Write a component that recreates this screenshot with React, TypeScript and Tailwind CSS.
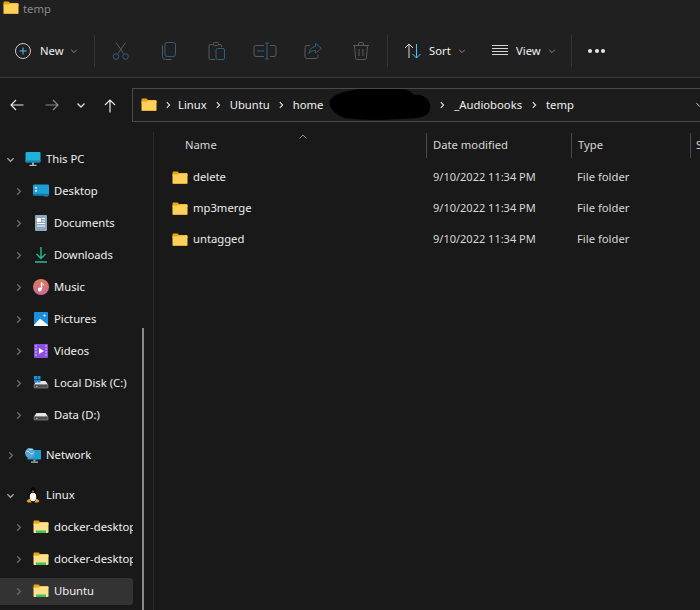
import React from 'react';

const FONT = 'font-["Noto_Sans","Open_Sans",sans-serif]';

function FolderIcon({ size = 16, green = false }: { size?: number; green?: boolean }) {
  return (
    <svg width={size} height={size} viewBox="0 0 16 16" className="shrink-0">
      <path d="M0.5 2.5a1 1 0 0 1 1-1h4l1.6 1.5h7.4a1 1 0 0 1 1 1v2h-15z" fill="#eaa60e" />
      <path d="M0.5 4.6h5.4l1.5-1.1h7.1a1 1 0 0 1 1 1v8.400a1 1 0 0 1-1 1h-13a1 1 0 0 1-1-1z" fill={green ? '#fde08c' : '#fcd05a'} />
      {green ? (
        <path d="M3 11.500h10V14H3z" fill="#3cc35a" />
      ) : (
        <path d="M0.500 13.200h15a1 1 0 0 1-1 .800h-13a1 1 0 0 1-1-.800z" fill="#e0a028" />
      )}
    </svg>
  );
}

function Chevron({ dir = 'right', color = '#7a7a7a', size = 10, width = 1.6 }: { dir?: 'right' | 'down' | 'up'; color?: string; size?: number; width?: number }) {
  const d = dir === 'right' ? 'M3.5 1.5 7 5 3.5 8.5' : dir === 'down' ? 'M1.5 3.5 5 7 8.5 3.5' : 'M1.5 6.5 5 3 8.5 6.5';
  return (
    <svg width={size} height={size} viewBox="0 0 10 10" fill="none" stroke={color} strokeWidth={width} className="shrink-0">
      <path d={d} />
    </svg>
  );
}

function ToolIcon({ children }: { children: React.ReactNode }) {
  return (
    <svg width="20" height="20" viewBox="0 0 20 20" fill="none" strokeWidth="1" className="shrink-0">
      {children}
    </svg>
  );
}

const GREY = '#5a5a5a';
const BLUE = '#2f5f7f';

function CutIcon() {
  return (
    <ToolIcon>
      <path d="M5 1.5 12.5 12.5M14.5 1.5 7 12.5" stroke={GREY} />
      <circle cx="5" cy="15.5" r="2.8" stroke={BLUE} />
      <circle cx="14.5" cy="15.5" r="2.8" stroke={BLUE} />
    </ToolIcon>
  );
}

function CopyIcon() {
  return (
    <ToolIcon>
      <rect x="6" y="1.5" width="10.5" height="14" rx="2" stroke={BLUE} />
      <path d="M3.5 4.5v11a3 3 0 0 0 3 3h6" stroke={GREY} />
    </ToolIcon>
  );
}

function PasteIcon() {
  return (
    <ToolIcon>
      <path d="M6 3.5H3.5a1.5 1.5 0 0 0-1.5 1.5v12a1.5 1.5 0 0 0 1.5 1.5H8M14.5 6V5a1.500 1.500 0 0 0-1.500-1.500H11" stroke={GREY} />
      <rect x="6.500" y="1.500" width="5" height="3" rx="1" stroke={GREY} />
      <rect x="9" y="7.500" width="8.500" height="11" rx="1.500" stroke={BLUE} />
    </ToolIcon>
  );
}

function RenameIcon() {
  return (
    <svg width="24" height="20" viewBox="0 0 24 20" fill="none" strokeWidth="1" className="shrink-0">
      <path d="M11 4.500H3a2 2 0 0 0-2 2v7a2 2 0 0 0 2 2h8" stroke={GREY} />
      <path d="M17 4.500h4a2 2 0 0 1 2 2v7a2 2 0 0 1-2 2h-4" stroke={GREY} />
      <path d="M4 10h7M12 2h4M12 18h4M14 2v16" stroke={BLUE} />
    </svg>
  );
}

function ShareIcon() {
  return (
    <ToolIcon>
      <path d="M7 4.500H4a2 2 0 0 0-2 2v9a2 2 0 0 0 2 2h9a2 2 0 0 0 2-2v-2" stroke={GREY} />
      <path d="M12.500 2.500 18.500 7.500 12.500 12v-2.500c-3.500 0-5 1-6.500 3 .3-4 2.500-6.500 6.500-7z" stroke={BLUE} />
    </ToolIcon>
  );
}

function DeleteIcon() {
  return (
    <ToolIcon>
      <path d="M2 4.500h16M7.500 4.500V3a1.500 1.500 0 0 1 1.500-1.500h2A1.500 1.500 0 0 1 12.500 3v1.500M3.500 4.500l1 12a2 2 0 0 0 2 2h7a2 2 0 0 0 2-2l1-12M8 8v7M12 8v7" stroke={GREY} />
    </ToolIcon>
  );
}

function ToolGap({ className }: { className: string }) {
  return <div className={`w-px h-8 bg-[#353535] shrink-0 ${className}`} />;
}

function ToolLabel({ label, className }: { label: string; className: string }) {
  return (
    <>
      <span className={`text-[11.25px] text-[#f0f0f0] ${className}`}>{label}</span>
      <Chevron dir="down" color="#9a9a9a" size={8} width={1.1} />
    </>
  );
}

function Toolbar() {
  return (
    <div className="h-[42px] flex items-center pl-[13px] pb-[5px] bg-[#202020] border-b border-[#3a3a3a] box-content">
      <svg width="20" height="20" viewBox="0 0 20 20" fill="none" className="shrink-0">
        <circle cx="10" cy="10" r="7.500" stroke="#c8c8c8" />
        <path d="M10 6.500v7M6.500 10h7" stroke="#4cc2ff" />
      </svg>
      <div className="ml-[7px] flex items-center">
        <ToolLabel label="New" className="w-[30px]" />
      </div>
      <ToolGap className="ml-[16px]" />
      <div className="ml-[16px]"><CutIcon /></div>
      <div className="ml-[28px]"><CopyIcon /></div>
      <div className="ml-[28px]"><PasteIcon /></div>
      <div className="ml-[26px]"><RenameIcon /></div>
      <div className="ml-[26px]"><ShareIcon /></div>
      <div className="ml-[28px]"><DeleteIcon /></div>
      <ToolGap className="ml-[16px]" />
      <svg width="20" height="20" viewBox="0 0 20 20" fill="none" className="ml-[15px] shrink-0">
        <path d="M6 17V3M2 7l4-4 4 4" stroke="#d8d8d8" />
        <path d="M13.500 3v14M9.500 13l4 4 4-4" stroke="#4cc2ff" />
      </svg>
      <div className="ml-[6px] flex items-center">
        <ToolLabel label="Sort" className="w-[29px]" />
      </div>
      <svg width="18" height="14" viewBox="0 0 18 14" fill="none" stroke="#d8d8d8" className="ml-[25px] shrink-0">
        <path d="M1 1.500h16M1 4.500h16M1 7.500h16M1 10.500h16" />
      </svg>
      <div className="ml-[7px] flex items-center">
        <ToolLabel label="View" className="w-[32px]" />
      </div>
      <ToolGap className="ml-[15px]" />
      <div className="ml-[16px] flex gap-[2.500px]">
        <span className="w-[4px] h-[4px] rounded-full bg-[#e8e8e8]" />
        <span className="w-[4px] h-[4px] rounded-full bg-[#e8e8e8]" />
        <span className="w-[4px] h-[4px] rounded-full bg-[#e8e8e8]" />
      </div>
    </div>
  );
}

function Crumb({ label, width }: { label?: string; width: string }) {
  return (
    <>
      <span className={`${width} flex justify-center shrink-0`}>
        <Chevron color="#e0e0e0" size={8} width={1.4} />
      </span>
      {label && <span className="text-[11.25px] text-[#f0f0f0] whitespace-nowrap">{label}</span>}
    </>
  );
}

function AddressBar() {
  return (
    <div className="h-[54px] flex items-center bg-[#191919]">
      <div className="w-[132px] shrink-0 flex items-center pl-[9px]">
        <svg width="16" height="16" viewBox="0 0 16 16" fill="none" stroke="#e8e8e8" strokeWidth="1.200">
          <path d="M2 8h12.500M7 3 2 8l5 5" />
        </svg>
        <svg width="16" height="16" viewBox="0 0 16 16" fill="none" stroke="#8a8a8a" strokeWidth="1.200" className="ml-[19px]">
          <path d="M1.500 8H14M9 3l5 5-5 5" />
        </svg>
        <span className="ml-[16px]"><Chevron dir="down" color="#d8d8d8" size={10} width={1.400} /></span>
        <svg width="16" height="16" viewBox="0 0 16 16" fill="none" stroke="#e8e8e8" strokeWidth="1.200" className="ml-[16px] mt-[1px]">
          <path d="M8 14.500V2M3 7l5-5 5 5" />
        </svg>
      </div>
      <div className="relative flex-1 h-[34px] border border-r-0 border-[#4a4a4a] flex items-center pl-[8px] overflow-hidden bg-[#1c1c1c]">
        <FolderIcon size={16} />
        <Crumb width="w-[21px]" label="Linux" />
        <Crumb width="w-[23px]" label="Ubuntu" />
        <Crumb width="w-[23px]" label="home" />
        <Crumb width="w-[22px]" />
        <span className="w-[84px] shrink-0" />
        <Crumb width="w-[25px]" label="_Audiobooks" />
        <Crumb width="w-[24px]" label="temp" />
        <span className="absolute right-[-4px] top-[11px]"><Chevron dir="down" color="#d0d0d0" size={9} width={1.100} /></span>
        <svg width="108" height="34" viewBox="0 0 108 34" className="absolute left-[194px] top-[-1px]">
          <path d="M3 12C8 5 24 1 44 0h24c10 0 16 3 19 7 8-1 15 3 16 10 1 8-4 12-14 13-22 2-50 3-72 0C12 28 0 21 3 12z" fill="#000" />
        </svg>
      </div>
    </div>
  );
}

function PcIcon() {
  return (
    <svg width="16" height="16" viewBox="0 0 16 16">
      <rect x="0.500" y="1" width="15" height="10.500" rx="1" fill="#1fb2d8" />
      <path d="M0.500 9.500h15v1a1 1 0 0 1-1 1h-13a1 1 0 0 1-1-1z" fill="#1580a8" />
      <rect x="7" y="11.500" width="2" height="2.500" fill="#9aa4aa" />
      <rect x="4.500" y="13.800" width="7" height="1.200" fill="#b8c0c4" />
    </svg>
  );
}

function DesktopIcon() {
  return (
    <svg width="16" height="16" viewBox="0 0 16 16">
      <rect x="0" y="1.500" width="16" height="11" rx="1" fill="#1c9fd6" />
      <rect x="0" y="10.800" width="16" height="1.700" fill="#1274a8" />
      <rect x="2" y="4" width="2" height="1.500" fill="#fff" />
      <rect x="2" y="7" width="2" height="1.500" fill="#fff" />
      <rect x="11.500" y="12.500" width="1" height="1" fill="#8fb8cc" />
      <rect x="13.500" y="12.500" width="1" height="1" fill="#8fb8cc" />
    </svg>
  );
}

function DocumentsIcon() {
  return (
    <svg width="16" height="16" viewBox="0 0 16 16">
      <rect x="2" y="0" width="12" height="16" rx="1" fill="#8fa8c0" />
      <rect x="4" y="3" width="4" height="4" fill="#fff" />
      <path d="M9 3.500h3M9 6h3M4 8.500h8M4 11h8" stroke="#fff" strokeWidth="1" />
    </svg>
  );
}

function DownloadsIcon() {
  return (
    <svg width="16" height="16" viewBox="0 0 16 16" fill="none" stroke="#1db88e" strokeWidth="1.500">
      <path d="M8 0v11M3.500 7 8 11.500 12.500 7" />
      <path d="M2 15h12" stroke="#2ab8a0" />
    </svg>
  );
}

function MusicIcon() {
  return (
    <svg width="16" height="16" viewBox="0 0 16 16">
      <defs>
        <linearGradient id="musicFill" x1="0" y1="0" x2="0" y2="1">
          <stop offset="0" stopColor="#e07a58" />
          <stop offset="1" stopColor="#c86a98" />
        </linearGradient>
      </defs>
      <circle cx="8" cy="8" r="8" fill="url(#musicFill)" />
      <path d="M8.500 3.500v6.500" stroke="#fff" strokeWidth="1.300" />
      <path d="M8.500 3.500c.5 1.500 2 1.500 2.500 3" stroke="#fff" strokeWidth="1" fill="none" />
      <circle cx="6.800" cy="10.500" r="1.900" fill="#fff" />
    </svg>
  );
}

function PicturesIcon() {
  return (
    <svg width="16" height="16" viewBox="0 0 16 16">
      <rect x="1" y="1" width="14" height="14" rx="1" fill="#1a8fe0" />
      <path d="M1 14 7 7.500 15 14v1H1z" fill="#fff" />
      <circle cx="11.500" cy="4.500" r="1.100" fill="#fff" />
    </svg>
  );
}

function VideosIcon() {
  return (
    <svg width="16" height="16" viewBox="0 0 16 16">
      <rect x="1" y="1" width="14" height="14" rx="1" fill="#8a4fe0" />
      <path d="M6 5v6l5-3z" fill="#fff" />
      <path d="M2 3h2M2 6h2M2 9h2M2 12h2M12 3h2M12 6h2M12 9h2M12 12h2" stroke="#d8c0f8" strokeWidth="1" />
    </svg>
  );
}

function DriveBody() {
  return (
    <>
      <path d="M3.500 6h9l2.500 3.500H1z" fill="#e4e4e4" />
      <rect x="1" y="9.500" width="14" height="3.500" rx="0.500" fill="#4e4e4e" stroke="#a8a8a8" strokeWidth="0.500" />
      <rect x="3" y="10.800" width="1.500" height="1.200" fill="#4fe04f" />
    </>
  );
}

function LocalDiskIcon() {
  return (
    <svg width="16" height="16" viewBox="0 0 16 16">
      <DriveBody />
      <rect x="1" y="1" width="3" height="3" fill="#1a90e0" />
      <rect x="4.500" y="1" width="3" height="3" fill="#1a90e0" />
      <rect x="1" y="4.500" width="3" height="3" fill="#1a90e0" />
      <rect x="4.500" y="4.500" width="3" height="3" fill="#1a90e0" />
    </svg>
  );
}

function DataDiskIcon() {
  return (
    <svg width="16" height="16" viewBox="0 0 16 16">
      <DriveBody />
    </svg>
  );
}

function NetworkIcon() {
  return (
    <svg width="16" height="16" viewBox="0 0 16 16">
      <rect x="2.500" y="3" width="13.500" height="9.500" rx="0.500" fill="#1c9fd6" />
      <rect x="8.500" y="12.500" width="2" height="2" fill="#9aa4aa" />
      <rect x="6" y="14.500" width="7" height="1.200" fill="#b8c0c4" />
      <circle cx="5" cy="6" r="5" fill="#5aa4d0" />
      <path d="M1.500 4.500c2-1 3 1 4 2s2 0 3-1M3.500 2c1 1 3 1 4 0" stroke="#cfeaf8" fill="none" strokeWidth="1" />
    </svg>
  );
}

function TuxIcon() {
  return (
    <svg width="16" height="16" viewBox="0 0 16 16">
      <ellipse cx="8" cy="10" rx="4.800" ry="5" fill="#050505" />
      <ellipse cx="8" cy="3.500" rx="2.600" ry="3.200" fill="#050505" />
      <ellipse cx="8" cy="10" rx="3.300" ry="4.200" fill="#f6f6f6" />
      <path d="M6.800 3.800h2.400L8 5.200z" fill="#f0b030" />
      <path d="M1.500 14 4.500 11.500 6.500 15.500H3zM14.500 14 11.500 11.500 9.500 15.500H13z" fill="#e8a428" />
    </svg>
  );
}

type NavItem = { label: string; icon: React.ReactNode; depth: 0 | 1; open?: boolean; selected?: boolean; gapBefore?: boolean };

const navItems: NavItem[] = [
  { label: 'This PC', icon: <PcIcon />, depth: 0, open: true },
  { label: 'Desktop', icon: <DesktopIcon />, depth: 1 },
  { label: 'Documents', icon: <DocumentsIcon />, depth: 1 },
  { label: 'Downloads', icon: <DownloadsIcon />, depth: 1 },
  { label: 'Music', icon: <MusicIcon />, depth: 1 },
  { label: 'Pictures', icon: <PicturesIcon />, depth: 1 },
  { label: 'Videos', icon: <VideosIcon />, depth: 1 },
  { label: 'Local Disk (C:)', icon: <LocalDiskIcon />, depth: 1 },
  { label: 'Data (D:)', icon: <DataDiskIcon />, depth: 1 },
  { label: 'Network', icon: <NetworkIcon />, depth: 0, gapBefore: true },
  { label: 'Linux', icon: <TuxIcon />, depth: 0, open: true, gapBefore: true },
  { label: 'docker-desktop', icon: <FolderIcon green />, depth: 1 },
  { label: 'docker-desktop-data', icon: <FolderIcon green />, depth: 1 },
  { label: 'Ubuntu', icon: <FolderIcon green />, depth: 1, selected: true },
];

function Sidebar() {
  return (
    <div className="relative w-[154px] shrink-0 border-r border-[#2a2a2a] pt-[11px] overflow-hidden">
      {navItems.map(item => (
        <div key={item.label} className={`w-[133px] h-8 flex items-center ${item.gapBefore ? 'mt-2' : ''}`}>
          <div className={`w-full h-[27px] flex items-center rounded-r-[3px] overflow-hidden ${item.depth === 1 ? 'pl-[13px]' : 'pl-[5px]'} ${item.selected ? 'bg-[#333333]' : ''}`}>
            <span className="w-[10px] shrink-0 flex justify-center">
              <Chevron dir={item.open ? 'down' : 'right'} color={item.open ? '#a0a0a0' : '#6a6a6a'} size={9} width={1.500} />
            </span>
            <span className="ml-[10px] shrink-0 flex">{item.icon}</span>
            <span className="ml-[5px] text-[11.25px] text-[#f0f0f0] whitespace-nowrap">{item.label}</span>
          </div>
        </div>
      ))}
      <div className="absolute left-[142px] top-[196px] bottom-0 w-[2px] bg-[#8a8a8a]" />
    </div>
  );
}

const rows = ['delete', 'mp3merge', 'untagged'];

function ColumnHead({ label, width, className = '' }: { label: string; width: string; className?: string }) {
  return (
    <div className={`${width} shrink-0 h-[25px] flex items-center pl-[6px] border-r border-[#4a4a4a] text-[11.25px] text-[#d8d8d8] whitespace-nowrap ${className}`}>
      {label}
    </div>
  );
}

function FileList() {
  return (
    <div className="relative flex-1 min-w-0 overflow-hidden">
      <div className="flex pt-[1px] pl-[3px]">
        <ColumnHead label="Name" width="w-[270px]" className="pl-[28px]" />
        <ColumnHead label="Date modified" width="w-[145px]" />
        <ColumnHead label="Type" width="w-[119px]" />
        <div className="h-[25px] flex items-center pl-[5px] text-[11.25px] text-[#d8d8d8]">S</div>
      </div>
      <span className="absolute left-[144px] top-[0px]"><Chevron dir="up" color="#8a8a8a" size={10} width={1} /></span>
      <div className="pt-[4px]">
        {rows.map(name => (
          <div key={name} className="h-[31px] flex items-center text-[11.25px] text-[#ececec]">
            <div className="w-[279px] shrink-0 flex items-center pl-[18px] gap-[5px]">
              <FolderIcon size={16} />
              <span>{name}</span>
            </div>
            <span className="w-[144px] shrink-0 text-[11px] text-[#d8d8d8]">9/10/2022 11:34 PM</span>
            <span className="text-[#d8d8d8]">File folder</span>
          </div>
        ))}
      </div>
    </div>
  );
}

export default function App() {
  return (
    <div className={`w-[700px] h-[610px] overflow-hidden flex flex-col bg-[#191919] ${FONT}`}>
      <div className="h-[30px] shrink-0 bg-[#202020] flex items-start pl-[3px] pt-0">
        <FolderIcon size={16} />
        <span className="ml-[4px] mt-[1px] text-[11.25px] text-[#8a8a8a]">temp</span>
      </div>
      <Toolbar />
      <AddressBar />
      <div className="flex-1 min-h-0 flex">
        <Sidebar />
        <FileList />
      </div>
    </div>
  );
}
